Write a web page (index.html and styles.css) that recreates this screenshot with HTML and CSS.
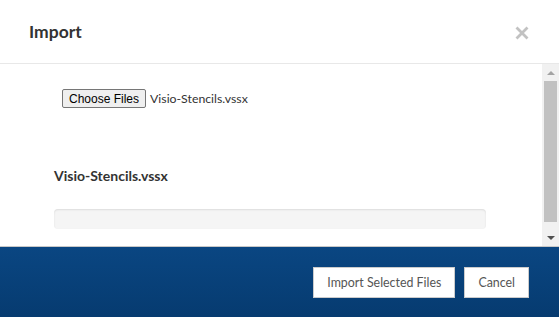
FILE: index.html
```html
<!DOCTYPE html>
<html lang="en">
<head>
    <meta charset="UTF-8">
    <meta name="viewport" content="width=device-width, initial-scale=1.0">
    <title>Import</title>
    <link rel="stylesheet" href="styles.css">
</head>
<body>
    <div class="modal">
        <div class="modal-header">
            <h1 class="modal-title">Import</h1>
            <span class="close">
                <svg width="14" height="14" viewBox="0 0 14 14">
                    <path d="M1.5 1.5 L12.5 12.5 M12.5 1.5 L1.5 12.5" stroke="#c2c2c2" stroke-width="2.8" fill="none"/>
                </svg>
            </span>
        </div>
        <div class="modal-body">
            <div class="body-content">
                <div class="file-row">
                    <button type="button" class="file-btn">Choose Files</button>
                    <span class="file-name">Visio-Stencils.vssx</span>
                </div>
                <h2 class="file-title">Visio-Stencils.vssx</h2>
                <div class="progress"></div>
            </div>
            <div class="scrollbar">
                <div class="scroll-arrow">
                    <svg width="8" height="4" viewBox="0 0 8 4"><path d="M0 4 L4 0 L8 4 Z" fill="#a3a3a3"/></svg>
                </div>
                <div class="scroll-track"><div class="scroll-thumb"></div></div>
                <div class="scroll-arrow">
                    <svg width="8" height="4" viewBox="0 0 8 4"><path d="M0 0 L8 0 L4 4 Z" fill="#505050"/></svg>
                </div>
            </div>
        </div>
        <div class="modal-footer">
            <button type="button" class="btn">Import Selected Files</button>
            <button type="button" class="btn">Cancel</button>
        </div>
    </div>
</body>
</html>
```

FILE: styles.css
```css
body {
    font-family: Lato, "Noto Sans", sans-serif;
    margin: 0;
    background-color: #ffffff;
    color: #333333;
}
.modal {
    display: flex;
    flex-direction: column;
    height: 317px;
}
.modal-header {
    display: flex;
    align-items: center;
    justify-content: space-between;
    height: 64px;
    padding: 0 30px 0 29px;
    border-bottom: 1px solid #e8e8e8;
    box-sizing: border-box;
}
.modal-title {
    margin: 0;
    font-size: 17.5px;
    font-weight: bold;
    color: #333333;
}
.close {
    display: flex;
    margin-top: 2px;
}
.modal-body {
    display: flex;
    height: 182px;
}
.body-content {
    flex: 1;
    overflow: hidden;
}
.file-row {
    display: flex;
    align-items: center;
    padding: 25px 0 0 62px;
}
.file-btn {
    font-family: "Liberation Sans", Arial, sans-serif;
    font-size: 12px;
    padding: 0 6px;
    height: 19px;
    border: 1px solid #767676;
    border-radius: 2px;
    background-color: #efefef;
    color: #000000;
}
.file-name {
    margin-left: 4px;
    font-size: 12.3px;
    color: #333333;
}
.file-title {
    margin: 58px 0 0 54px;
    font-size: 14px;
    font-weight: bold;
    line-height: 20px;
}
.progress {
    margin: 23px 56px 24px 54px;
    height: 20px;
    background-color: #f5f5f5;
    border-radius: 4px;
    box-shadow: inset 0 1px 2px rgba(0, 0, 0, 0.1);
}
.scrollbar {
    width: 17px;
    display: flex;
    flex-direction: column;
    background-color: #f1f1f1;
}
.scroll-arrow {
    height: 17px;
    display: flex;
    align-items: center;
    justify-content: center;
}
.scroll-track {
    flex: 1;
    padding: 0 2px 7px 2px;
}
.scroll-thumb {
    height: 100%;
    background-color: #c1c1c1;
}
.modal-footer {
    flex: 1;
    display: flex;
    justify-content: flex-end;
    align-items: flex-start;
    gap: 9px;
    padding: 20px 30px 0 0;
    border-top: 1px solid #c8c8c8;
    background: linear-gradient(#0a4682, #063b70);
}
.btn {
    font-family: Lato, "Noto Sans", sans-serif;
    font-size: 12.4px;
    height: 31px;
    padding: 0 13px;
    background-color: #ffffff;
    color: #555555;
    border: 1px solid #cccccc;
    border-radius: 0;
}
```
